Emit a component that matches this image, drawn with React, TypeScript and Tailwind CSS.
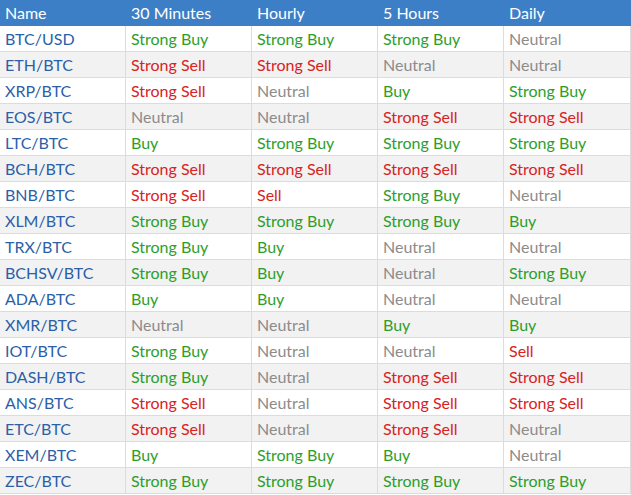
const rows: [string, string, string, string, string][] = [
  ["BTC/USD", "Strong Buy", "Strong Buy", "Strong Buy", "Neutral"],
  ["ETH/BTC", "Strong Sell", "Strong Sell", "Neutral", "Neutral"],
  ["XRP/BTC", "Strong Sell", "Neutral", "Buy", "Strong Buy"],
  ["EOS/BTC", "Neutral", "Neutral", "Strong Sell", "Strong Sell"],
  ["LTC/BTC", "Buy", "Strong Buy", "Strong Buy", "Strong Buy"],
  ["BCH/BTC", "Strong Sell", "Strong Sell", "Strong Sell", "Strong Sell"],
  ["BNB/BTC", "Strong Sell", "Sell", "Strong Buy", "Neutral"],
  ["XLM/BTC", "Strong Buy", "Strong Buy", "Strong Buy", "Buy"],
  ["TRX/BTC", "Strong Buy", "Buy", "Neutral", "Neutral"],
  ["BCHSV/BTC", "Strong Buy", "Buy", "Neutral", "Strong Buy"],
  ["ADA/BTC", "Buy", "Buy", "Neutral", "Neutral"],
  ["XMR/BTC", "Neutral", "Neutral", "Buy", "Buy"],
  ["IOT/BTC", "Strong Buy", "Neutral", "Neutral", "Sell"],
  ["DASH/BTC", "Strong Buy", "Neutral", "Strong Sell", "Strong Sell"],
  ["ANS/BTC", "Strong Sell", "Neutral", "Strong Sell", "Strong Sell"],
  ["ETC/BTC", "Strong Sell", "Neutral", "Strong Sell", "Neutral"],
  ["XEM/BTC", "Buy", "Strong Buy", "Buy", "Neutral"],
  ["ZEC/BTC", "Strong Buy", "Strong Buy", "Strong Buy", "Strong Buy"],
];

const headers = ["Name", "30 Minutes", "Hourly", "5 Hours", "Daily"];

const signalColor = (s: string) => {
  if (s.includes("Buy")) return "text-[#2e9e2a]";
  if (s.includes("Sell")) return "text-[#d82321]";
  return "text-[#8c8c8c]";
};

export default function App() {
  return (
    <div
      className="w-[631px] h-[495px] bg-white text-[16px] overflow-hidden"
      style={{ fontFamily: "Lato, 'Open Sans', sans-serif" }}
    >
      <div className="grid grid-cols-[126px_126px_126px_126px_127px] h-[26px] bg-[#3d7fc6] text-white">
        {headers.map((h) => (
          <div key={h} className="flex items-center pl-[5px]">
            {h}
          </div>
        ))}
      </div>
      {rows.map((r, i) => (
        <div
          key={r[0]}
          className={`grid grid-cols-[126px_126px_126px_126px_127px] h-[26px] border-b border-[#dcdcdc] ${
            i % 2 === 0 ? "bg-white" : "bg-[#f2f2f2]"
          }`}
        >
          <div className="flex items-center pl-[5px] pt-[1px] border-r border-[#dcdcdc] text-[#2b5fa8]">
            {r[0]}
          </div>
          {r.slice(1).map((v, j) => (
            <div
              key={j}
              className={`flex items-center pl-[5px] pt-[1px] border-r border-[#dcdcdc] ${signalColor(v)}`}
            >
              {v}
            </div>
          ))}
        </div>
      ))}
    </div>
  );
}
